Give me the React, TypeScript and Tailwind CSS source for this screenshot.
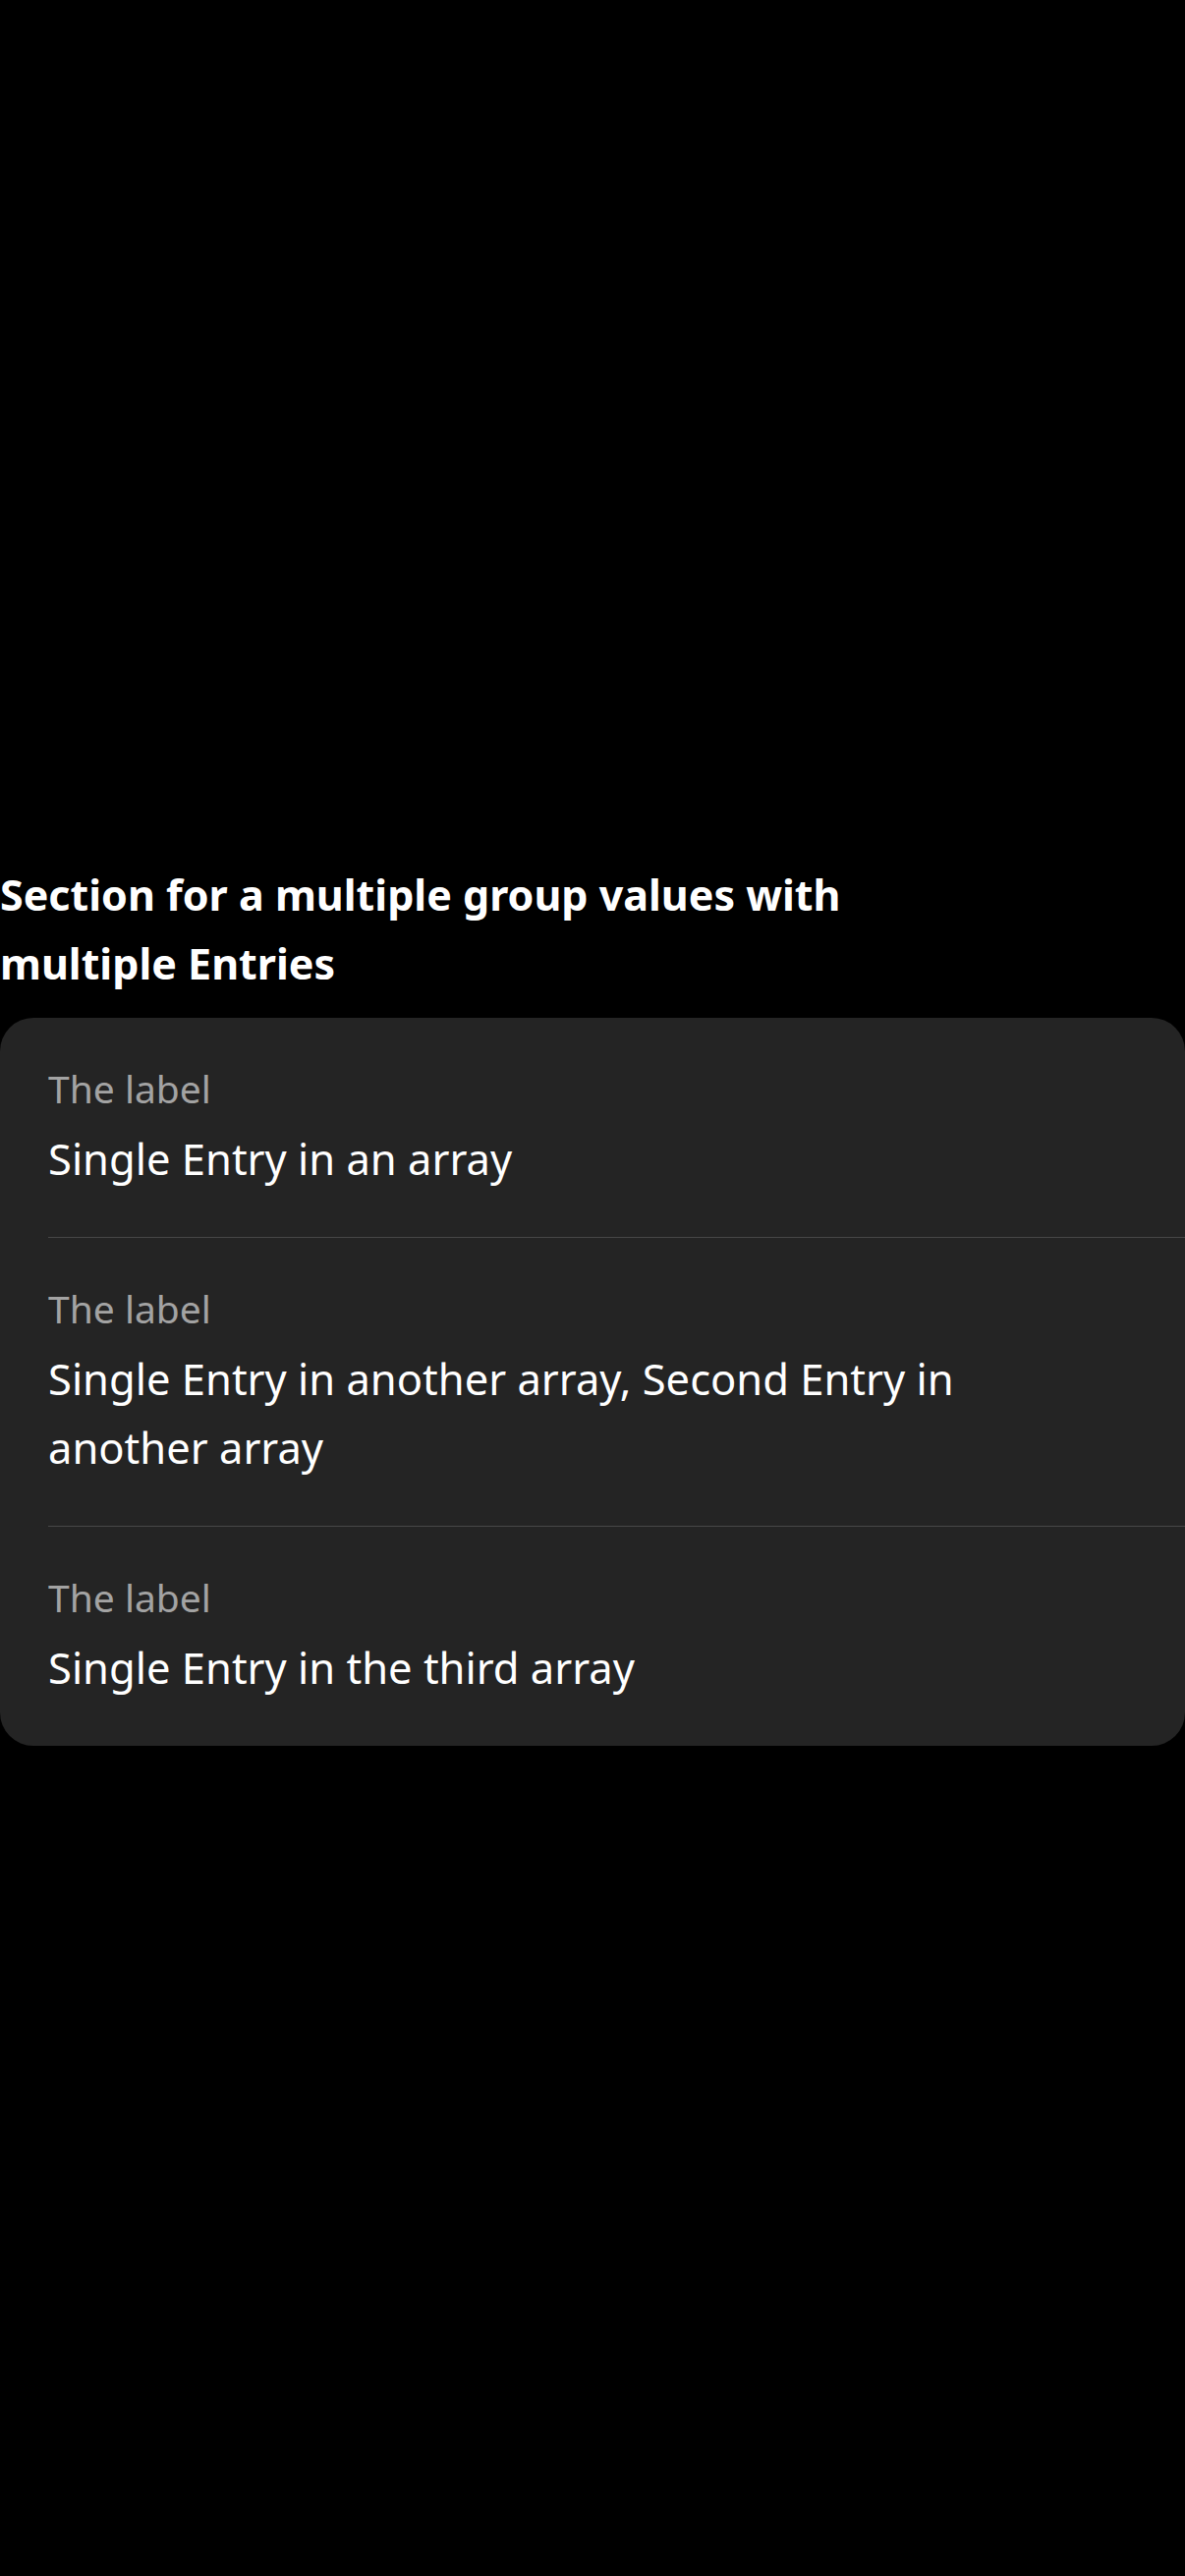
export default function App() {
  const entries = [
    { label: 'The label', value: 'Single Entry in an array' },
    { label: 'The label', value: 'Single Entry in another array, Second Entry in another array' },
    { label: 'The label', value: 'Single Entry in the third array' },
  ];

  return (
    <div className="min-h-screen bg-black text-white font-['Noto_Sans',_'Open_Sans',_sans-serif] pt-[876px] pb-20">
      <h2 className="max-w-[940px] text-[43px] leading-[70px] font-bold">
        Section for a multiple group values with multiple Entries
      </h2>

      <div className="mt-[20px] bg-[#242424] rounded-[34px]">
        {entries.map((entry, idx) => (
          <div key={idx} className="pl-[49px]">
            <div
              className={
                idx < entries.length - 1
                  ? 'pt-[44px] pb-[45px] pr-[49px] border-b border-[#474747]'
                  : 'pt-[44px] pb-[45px] pr-[49px]'
              }
            >
              <p className="text-[39px] leading-[56px] text-[#a3a3a3]">{entry.label}</p>
              <p className="mt-[8px] max-w-[1040px] text-[43.5px] leading-[70px] text-white">
                {entry.value}
              </p>
            </div>
          </div>
        ))}
      </div>
    </div>
  );
}
